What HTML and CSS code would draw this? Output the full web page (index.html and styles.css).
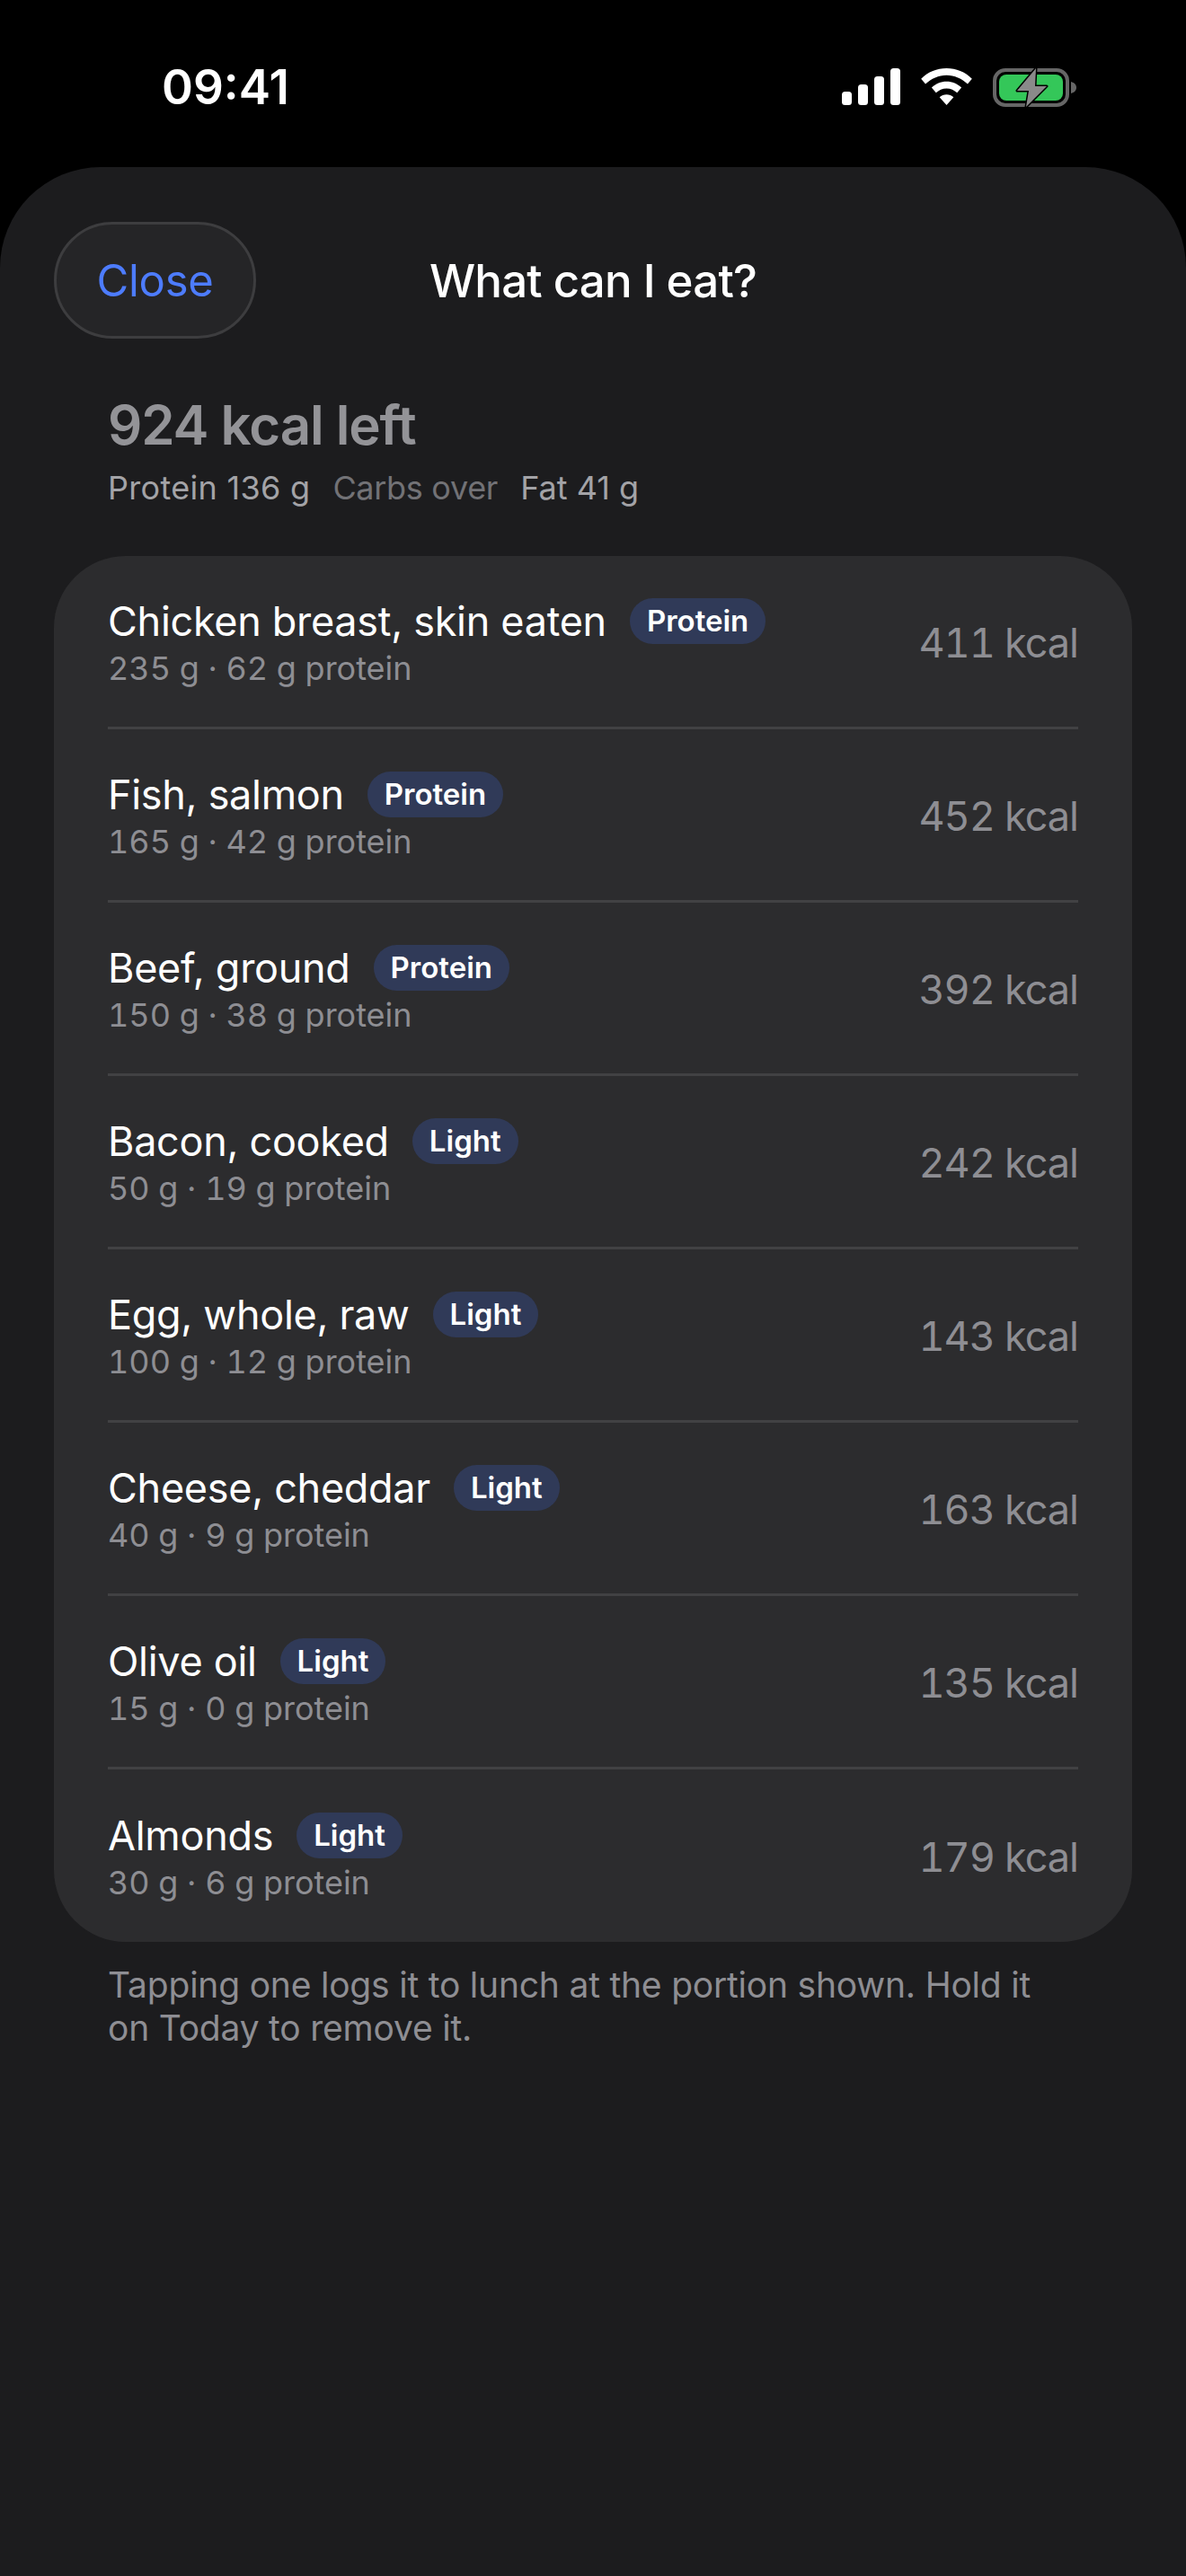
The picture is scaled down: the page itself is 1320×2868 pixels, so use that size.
FILE: index.html
```html
<!DOCTYPE html>
<html lang="en">
<head>
<meta charset="utf-8">
<title>What can I eat?</title>
<link rel="stylesheet" href="styles.css">
</head>
<body>
<div class="status">
  <span class="time">09:41</span>
  <div class="status-icons">
    <svg class="sig" width="65" height="41" viewBox="0 0 65 41"><rect x="0" y="26" width="11" height="15" rx="3.500" fill="#fff"/><rect x="18" y="18" width="11" height="23" rx="3.500" fill="#fff"/><rect x="36" y="9" width="11" height="32" rx="3.500" fill="#fff"/><rect x="54" y="0" width="11" height="41" rx="3.500" fill="#fff"/></svg>
    <svg class="wifi" width="57" height="41" viewBox="0 0 58 42"><path d="M29 0C40 0 50 4 58 12L53 18C46.500 12 38 8 29 8S11.500 12 5 18L0 12C8 4 18 0 29 0Z" fill="#fff"/><path d="M29 15C35.500 15 41.500 17.500 46 22L41 28C38 25 33.500 23 29 23S20 25 17 28L12 22C16.500 17.500 22.500 15 29 15Z" fill="#fff"/><path d="M29 30C32 30 35 31 37 33L29 42L21 33C23 31 26 30 29 30Z" fill="#fff"/></svg>
    <svg class="batt" width="93" height="46" viewBox="0 0 93 46"><rect x="2" y="4" width="81" height="39" rx="12" fill="none" stroke="#666" stroke-width="4"/><path d="M87 17C90.500 18 93 20 93 23.500S90.500 29 87 30Z" fill="#666"/><rect x="7" y="9" width="71" height="29" rx="8" fill="#34c759"/><path d="M48 2L27 27H40L37 45L60 22H47Z" fill="#8a8a8a" stroke="#000" stroke-width="3" stroke-linejoin="round" paint-order="stroke"/></svg>
  </div>
</div>
<main class="sheet">
  <header class="nav">
    <button class="close">Close</button>
    <h1 class="title">What can I eat?</h1>
  </header>
  <section class="summary">
    <h2 class="left">924 kcal left</h2>
    <div class="macros"><span class="wide">Protein 136 g</span><span class="dim">Carbs over</span><span>Fat 41 g</span></div>
  </section>
  <section class="card">
    <div class="row"><div class="info"><div class="name-line"><span class="name">Chicken breast, skin eaten</span><span class="tag">Protein</span></div><div class="sub">235 g · 62 g protein</div></div><span class="kcal">411 kcal</span></div>
    <div class="row"><div class="info"><div class="name-line"><span class="name">Fish, salmon</span><span class="tag">Protein</span></div><div class="sub">165 g · 42 g protein</div></div><span class="kcal">452 kcal</span></div>
    <div class="row"><div class="info"><div class="name-line"><span class="name">Beef, ground</span><span class="tag">Protein</span></div><div class="sub">150 g · 38 g protein</div></div><span class="kcal">392 kcal</span></div>
    <div class="row"><div class="info"><div class="name-line"><span class="name">Bacon, cooked</span><span class="tag">Light</span></div><div class="sub">50 g · 19 g protein</div></div><span class="kcal">242 kcal</span></div>
    <div class="row"><div class="info"><div class="name-line"><span class="name">Egg, whole, raw</span><span class="tag">Light</span></div><div class="sub">100 g · 12 g protein</div></div><span class="kcal">143 kcal</span></div>
    <div class="row"><div class="info"><div class="name-line"><span class="name">Cheese, cheddar</span><span class="tag">Light</span></div><div class="sub">40 g · 9 g protein</div></div><span class="kcal">163 kcal</span></div>
    <div class="row"><div class="info"><div class="name-line"><span class="name">Olive oil</span><span class="tag">Light</span></div><div class="sub">15 g · 0 g protein</div></div><span class="kcal">135 kcal</span></div>
    <div class="row"><div class="info"><div class="name-line"><span class="name">Almonds</span><span class="tag">Light</span></div><div class="sub">30 g · 6 g protein</div></div><span class="kcal">179 kcal</span></div>
  </section>
  <p class="note">Tapping one logs it to lunch at the portion shown. Hold it on Today to remove it.</p>
</main>
</body>
</html>
```
FILE: styles.css
```css
* { box-sizing: border-box; }
html, body { margin: 0; padding: 0; }
body { width: 1320px; height: 2868px; background: #000; font-family: Inter, "Liberation Sans", sans-serif; color: #fff; overflow: hidden; }
.status { height: 186px; padding: 72px 122px 0 180px; display: flex; justify-content: space-between; align-items: flex-start; }
.time { font-size: 53px; font-weight: 600; line-height: 50px; }
.status-icons { display: flex; align-items: flex-start; gap: 23px; padding-top: 2px; }
.sig, .wifi { margin-top: 2px; }
.sheet { height: 2682px; background: #1c1c1e; border-radius: 112px 112px 0 0; padding: 61px 60px 0; }
.nav { position: relative; height: 130px; display: flex; align-items: center; }
.close { width: 225px; height: 130px; border-radius: 65px; border: 3px solid #3d3d3f; background: #252527; color: #4d7cfe; font: 400 49px Inter, sans-serif; letter-spacing: -0.3px; padding: 0; }
.title { position: absolute; left: 0; right: 0; top: 0; bottom: 0; margin: 0; display: flex; align-items: center; justify-content: center; font-size: 51px; font-weight: 500; letter-spacing: -0.8px; pointer-events: none; }
.summary { padding: 60px 60px 0; }
.left { margin: 0; font-size: 60px; line-height: 72px; font-weight: 600; letter-spacing: -1.1px; color: #939397; }
.macros { display: flex; gap: 25px; margin-top: 12px; font-size: 36px; line-height: 44px; color: #a3a3a7; }
.macros .wide { letter-spacing: 0.3px; }
.macros .dim { color: #727276; letter-spacing: -0.3px; }
.card { margin-top: 54px; background: #2c2c2e; border-radius: 80px; padding: 0 60px; }
.row { height: 193px; display: flex; align-items: center; justify-content: space-between; border-bottom: 3px solid #414143; }
.row:last-child { border-bottom: 0; height: 192px; }
.info { padding-top: 2px; }
.name-line { display: flex; align-items: center; gap: 26px; height: 54px; }
.name { font-size: 45px; font-weight: 400; letter-spacing: -0.3px; }
.tag { height: 51px; padding: 0 19px; border-radius: 26px; background: #303a58; font-size: 33px; font-weight: 600; display: flex; align-items: center; color: #fff; }
.sub { font-size: 36px; line-height: 44px; margin-top: 4px; font-variant-numeric: tabular-nums; color: #8e8e93; }
.kcal { padding-top: 2px; font-size: 45px; font-variant-numeric: tabular-nums; letter-spacing: -1px; color: #8e8e93; }
.note { margin: 24px 60px 0; font-size: 39px; line-height: 48px; letter-spacing: -0.21px; color: #8e8e93; }
```
